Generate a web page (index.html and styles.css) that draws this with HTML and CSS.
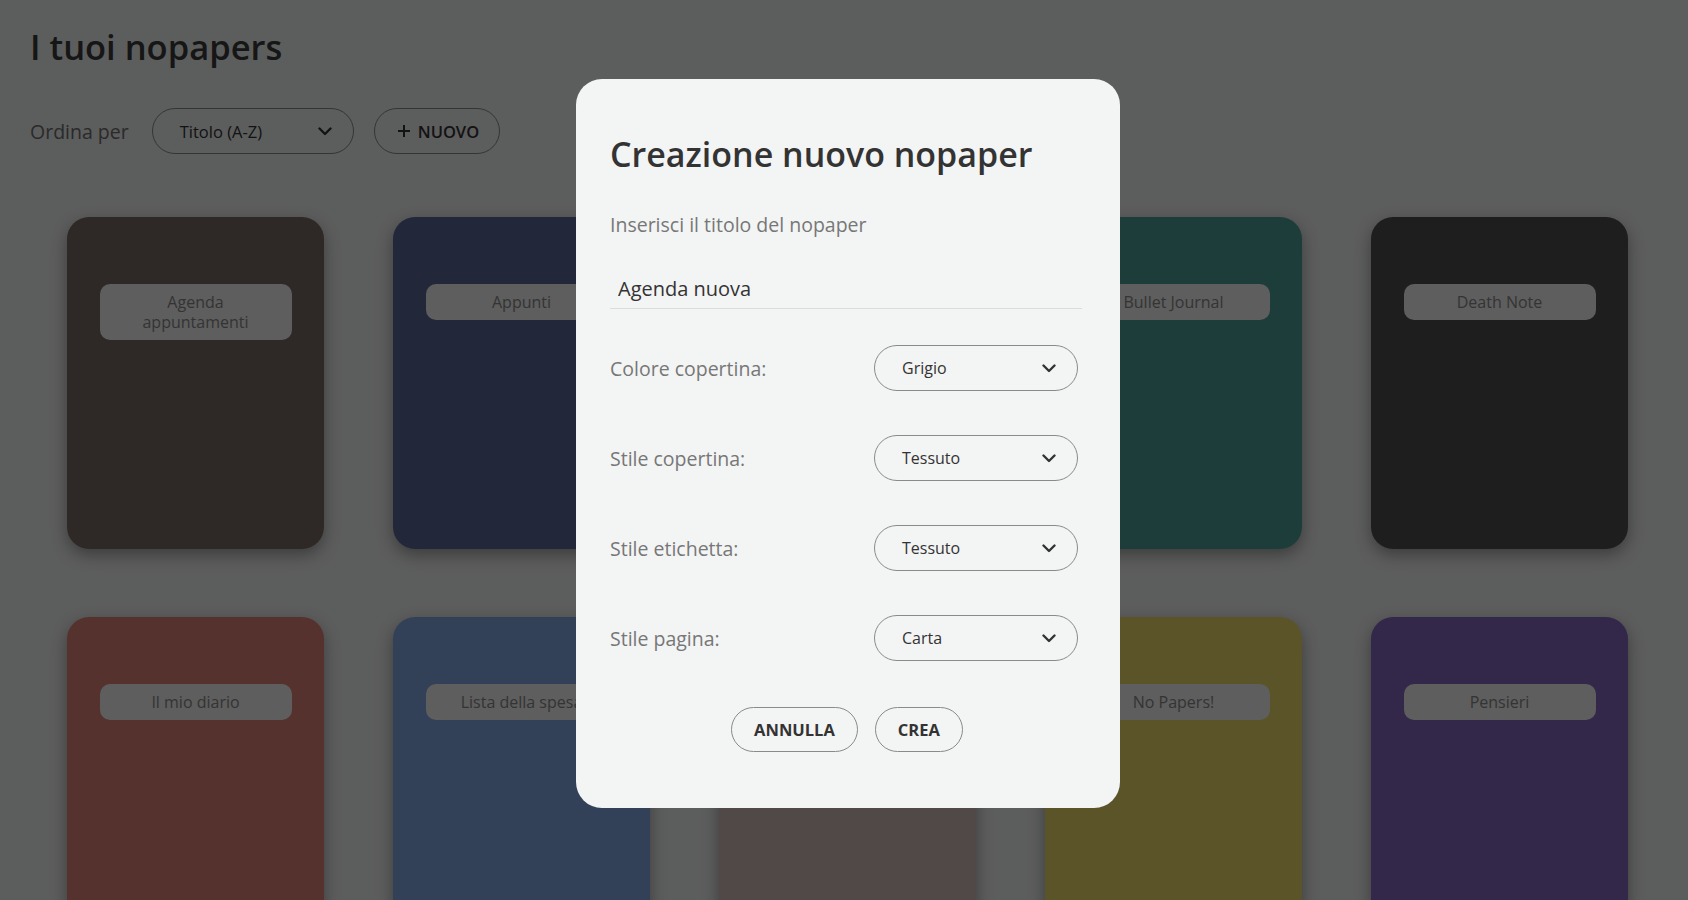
FILE: index.html
```html
<!DOCTYPE html>
<html lang="it">
<head>
    <meta charset="UTF-8">
    <meta name="viewport" content="width=device-width, initial-scale=1.0">
    <title>I tuoi nopapers</title>
    <link rel="stylesheet" href="styles.css">
</head>
<body>
    <main class="page">
        <h1 class="page-title">I tuoi nopapers</h1>
        <div class="toolbar">
            <span class="toolbar-label">Ordina per</span>
            <div class="pill-select sort-select">
                <span>Titolo (A-Z)</span>
                <svg class="chevron" viewBox="0 0 14 9" width="14" height="9"><path d="M1.5 1.5 L7 7 L12.5 1.5" /></svg>
            </div>
            <button class="pill-btn new-btn">
                <svg class="plus" viewBox="0 0 14 14" width="14" height="14"><path d="M7 1 V13 M1 7 H13" /></svg>
                NUOVO
            </button>
        </div>

        <div class="shelf">
            <div class="notebook cover-brown"><div class="notebook-label">Agenda appuntamenti</div></div>
            <div class="notebook cover-indigo"><div class="notebook-label">Appunti</div></div>
            <div class="notebook cover-rose"><div class="notebook-label">Blocco note</div></div>
            <div class="notebook cover-teal"><div class="notebook-label">Bullet Journal</div></div>
            <div class="notebook cover-grey"><div class="notebook-label">Death Note</div></div>

            <div class="notebook cover-red"><div class="notebook-label">Il mio diario</div></div>
            <div class="notebook cover-sky"><div class="notebook-label">Lista della spesa</div></div>
            <div class="notebook cover-mauve"><div class="notebook-label">Lavoro</div></div>
            <div class="notebook cover-yellow"><div class="notebook-label">No Papers!</div></div>
            <div class="notebook cover-violet"><div class="notebook-label">Pensieri</div></div>
        </div>
    </main>

    <!-- dialog for a new nopaper -->
    <div class="overlay">
        <div class="modal">
            <h2 class="modal-title">Creazione nuovo nopaper</h2>
            <p class="modal-hint">Inserisci il titolo del nopaper</p>
            <input class="title-input" type="text" value="Agenda nuova">

            <div class="option-row">
                <span class="option-label">Colore copertina:</span>
                <div class="pill-select">
                    <span>Grigio</span>
                    <svg class="chevron" viewBox="0 0 14 9" width="14" height="9"><path d="M1.5 1.5 L7 7 L12.5 1.5" /></svg>
                </div>
            </div>
            <div class="option-row">
                <span class="option-label">Stile copertina:</span>
                <div class="pill-select">
                    <span>Tessuto</span>
                    <svg class="chevron" viewBox="0 0 14 9" width="14" height="9"><path d="M1.5 1.5 L7 7 L12.5 1.5" /></svg>
                </div>
            </div>
            <div class="option-row">
                <span class="option-label">Stile etichetta:</span>
                <div class="pill-select">
                    <span>Tessuto</span>
                    <svg class="chevron" viewBox="0 0 14 9" width="14" height="9"><path d="M1.5 1.5 L7 7 L12.5 1.5" /></svg>
                </div>
            </div>
            <div class="option-row">
                <span class="option-label">Stile pagina:</span>
                <div class="pill-select">
                    <span>Carta</span>
                    <svg class="chevron" viewBox="0 0 14 9" width="14" height="9"><path d="M1.5 1.5 L7 7 L12.5 1.5" /></svg>
                </div>
            </div>

            <div class="modal-actions">
                <button class="pill-btn">ANNULLA</button>
                <button class="pill-btn">CREA</button>
            </div>
        </div>
    </div>
</body>
</html>
```

FILE: styles.css
```css
body {
    font-family: 'Open Sans', 'Noto Sans', sans-serif;
    margin: 0;
    padding: 0;
    background-color: #f2f3f3;
    color: #333;
    overflow: hidden;
    height: 900px;
}
.page {
    padding: 25px 30px 0 30px;
}
.page-title {
    font-size: 34.5px;
    font-weight: 600;
    line-height: 44px;
    margin: 0;
    color: #3a3a3a;
}
.toolbar {
    display: flex;
    align-items: center;
    margin-top: 39px;
}
.toolbar-label {
    font-size: 19.5px;
    color: #707070;
    margin-right: 23px;
}
.pill-select {
    display: flex;
    align-items: center;
    justify-content: space-between;
    box-sizing: border-box;
    width: 204px;
    height: 46px;
    padding: 0 21px 0 27px;
    border: 1px solid #8a8a8a;
    border-radius: 23px;
    font-size: 16px;
    color: #333;
}
.sort-select {
    width: 202px;
    font-size: 16.5px;
}
.chevron {
    fill: none;
    stroke: #333;
    stroke-width: 2.4;
    stroke-linecap: round;
    stroke-linejoin: round;
}
.pill-btn {
    font-family: 'Open Sans', 'Noto Sans', sans-serif;
    height: 46px;
    padding: 0 22px;
    border: 1px solid #8a8a8a;
    border-radius: 23px;
    background: transparent;
    font-size: 16.5px;
    font-weight: 700;
    color: #333;
    cursor: pointer;
}
.new-btn {
    display: flex;
    align-items: center;
    gap: 7px;
    margin-left: 20px;
    padding: 0 20px 0 22px;
    font-size: 16.5px;
    font-weight: 600;
}
.plus {
    fill: none;
    stroke: #333;
    stroke-width: 2;
}

/* shelf of notebooks */
.shelf {
    display: grid;
    grid-template-columns: repeat(5, 257px);
    column-gap: 69px;
    row-gap: 68px;
    margin-top: 63px;
    padding-left: 37px;
}
.notebook {
    height: 332px;
    border-radius: 22px;
    padding-top: 67px;
    box-sizing: border-box;
    box-shadow: 0 6px 16px rgba(0, 0, 0, 0.35);
}
.notebook-label {
    width: 192px;
    margin: 0 auto;
    box-sizing: border-box;
    padding: 8px 16px;
    border-radius: 10px;
    background: #f6f6f6;
    color: #8a8a8a;
    font-size: 16px;
    line-height: 20px;
    text-align: center;
}
.cover-brown { background-color: #796c64; }
.cover-indigo { background-color: #596799; }
.cover-rose { background-color: #c9a9a9; }
.cover-teal { background-color: #4ca099; }
.cover-grey { background-color: #4f4f4f; }
.cover-red { background-color: #e08476; }
.cover-sky { background-color: #84a8e8; }
.cover-mauve { background-color: #d5bdbd; }
.cover-yellow { background-color: #eddd69; }
.cover-violet { background-color: #8669c3; }

/* modal */
.overlay {
    position: fixed;
    top: 0;
    left: 0;
    right: 0;
    bottom: 0;
    background: rgba(0, 0, 0, 0.62);
    display: flex;
    justify-content: center;
    align-items: flex-start;
    padding: 79px 0 0 8px;
}
.modal {
    width: 544px;
    box-sizing: border-box;
    padding: 53px 38px 56px 34px;
    background: #f3f4f4;
    border-radius: 26px;
}
.modal-title {
    margin: 0;
    font-size: 34px;
    font-weight: 600;
    line-height: 44px;
    color: #333;
}
.modal-hint {
    margin: 37px 0 0 0;
    font-size: 19.5px;
    line-height: 24px;
    color: #777;
}
.title-input {
    display: block;
    width: 100%;
    box-sizing: border-box;
    margin-top: 31px;
    height: 41px;
    padding: 0 8px;
    border: none;
    border-bottom: 1px solid #dcdcdc;
    background: transparent;
    outline: none;
    font-family: 'Open Sans', 'Noto Sans', sans-serif;
    font-size: 20px;
    color: #333;
}
.option-row {
    display: flex;
    align-items: center;
    justify-content: space-between;
    margin-top: 44px;
    padding-right: 4px;
}
.title-input + .option-row {
    margin-top: 36px;
}
.option-label {
    font-size: 19.5px;
    color: #777;
}
.modal-actions {
    display: flex;
    justify-content: center;
    gap: 17px;
    margin-top: 46px;
    padding-left: 2px;
}
.modal-actions .pill-btn {
    height: 45px;
}
```
